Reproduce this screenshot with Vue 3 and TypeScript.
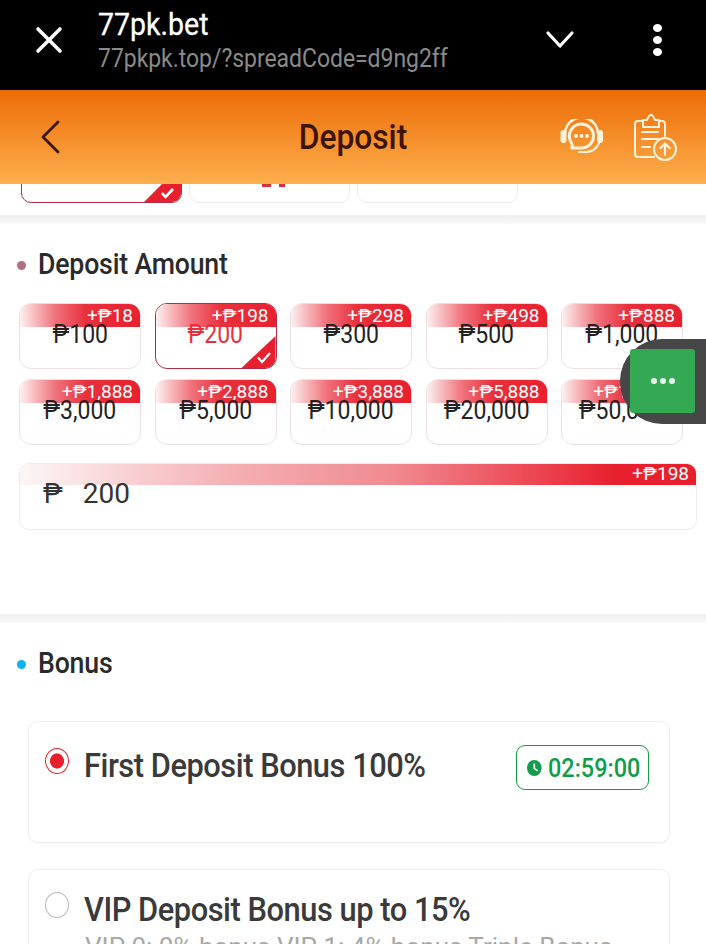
<script setup lang="ts">
const amounts = [
  { value: '₱100', bonus: '+₱18' },
  { value: '₱200', bonus: '+₱198', active: true },
  { value: '₱300', bonus: '+₱298' },
  { value: '₱500', bonus: '+₱498' },
  { value: '₱1,000', bonus: '+₱888' },
  { value: '₱3,000', bonus: '+₱1,888' },
  { value: '₱5,000', bonus: '+₱2,888' },
  { value: '₱10,000', bonus: '+₱3,888' },
  { value: '₱20,000', bonus: '+₱5,888' },
  { value: '₱50,000', bonus: '+₱18,888' },
]
</script>

<template>
  <div class="page">
    <div class="browser-bar">
      <svg class="close-icon" width="28" height="28" viewBox="0 0 28 28">
        <path d="M3 3 L25 25 M25 3 L3 25" stroke="#fff" stroke-width="3.6" stroke-linecap="round" />
      </svg>
      <div class="browser-text">
        <div class="site"><span class="squeeze">77pk.bet</span></div>
        <div class="url"><span class="squeeze">77pkpk.top/?spreadCode=d9ng2ff</span></div>
      </div>
      <svg class="chevron" width="30" height="20" viewBox="0 0 30 20">
        <path d="M3 3 L15 16 L27 3" fill="none" stroke="#fff" stroke-width="3.2" stroke-linecap="round" stroke-linejoin="round" />
      </svg>
      <div class="dots"><i></i><i></i><i></i></div>
    </div>

    <header class="top-bar">
      <svg class="back" width="22" height="34" viewBox="0 0 22 34">
        <path d="M18 2 L3 17 L18 32" fill="none" stroke="#3c1403" stroke-width="2.8" stroke-linecap="round" stroke-linejoin="round" />
      </svg>
      <h1 class="title"><span class="squeeze center">Deposit</span></h1>
      <svg class="support" width="44" height="38" viewBox="0 0 44 38">
        <path d="M5 15 A16.5 16.5 0 0 1 38 15" fill="none" stroke="#fff3dc" stroke-width="2.6" />
        <rect x="0.5" y="11" width="6" height="13" rx="3" fill="#fff3dc" />
        <rect x="37" y="11" width="6" height="13" rx="3" fill="#fff3dc" />
        <path d="M21.5 5 A12 12 0 0 1 21.5 29 L12 29 Q13 26 11 23 A12 12 0 0 1 21.5 5 Z" fill="none" stroke="#fff3dc" stroke-width="3" stroke-linejoin="round" />
        <circle cx="16" cy="17" r="2" fill="#fff3dc" />
        <circle cx="21.5" cy="17" r="2" fill="#fff3dc" />
        <circle cx="27" cy="17" r="2" fill="#fff3dc" />
        <path d="M19 33 H26 Q35 33 39 24" fill="none" stroke="#fff3dc" stroke-width="2.2" stroke-linecap="round" />
      </svg>
      <svg class="records" width="44" height="48" viewBox="0 0 44 48">
        <path d="M8 7 H4 Q1 7 1 10 V40 Q1 43 4 43 H20 M25 7 H28 Q31 7 31 10 V22" fill="none" stroke="#fff3dc" stroke-width="2" stroke-linecap="round" />
        <path d="M9 13 V6 H13 Q15 1 17 1 Q19 1 21 6 H25 V13 Z" fill="none" stroke="#fff3dc" stroke-width="2" stroke-linejoin="round" />
        <path d="M8 18 H24 M8 25 H24 M8 33 H16" stroke="#fff3dc" stroke-width="2" stroke-linecap="round" />
        <circle cx="31" cy="35" r="11" fill="none" stroke="#fff3dc" stroke-width="2" />
        <path d="M31 41 V30 M26.5 34 L31 29.5 L35.5 34" fill="none" stroke="#fff3dc" stroke-width="2.2" stroke-linecap="round" stroke-linejoin="round" />
      </svg>
    </header>

    <div class="channels">
      <div class="channel channel-active">
        <span class="corner small"><svg width="15" height="12" viewBox="0 0 15 12"><path d="M2 6 L5.5 10 L13 2" fill="none" stroke="#fff" stroke-width="2.6" /></svg></span>
      </div>
      <div class="channel"><span class="logo-tip"></span><span class="logo-tip right"></span></div>
      <div class="channel"></div>
    </div>
    <div class="divider"></div>

    <section class="amount">
      <h2 class="section-title"><span class="dot dot-mauve"></span><span class="squeeze">Deposit Amount</span></h2>
      <div class="grid">
        <div v-for="a in amounts" :key="a.value" class="tile" :class="{ active: a.active }">
          <div class="ribbon">{{ a.bonus }}</div>
          <div class="value"><span class="squeeze center">{{ a.value }}</span></div>
          <span v-if="a.active" class="corner"><svg width="16" height="13" viewBox="0 0 16 13"><path d="M2 6.5 L6 11 L14 2" fill="none" stroke="#fff" stroke-width="2.2" /></svg></span>
        </div>
      </div>
      <div class="input-box">
        <div class="ribbon wide">+₱198</div>
        <div class="input-value"><span class="peso">₱</span><span>200</span></div>
      </div>
    </section>
    <div class="divider"></div>

    <section class="bonus">
      <h2 class="section-title"><span class="dot dot-blue"></span><span class="squeeze">Bonus</span></h2>
      <div class="bonus-card first">
        <span class="radio radio-on"></span>
        <div class="bonus-name"><span class="squeeze">First Deposit Bonus 100%</span></div>
        <div class="timer">
          <svg width="18" height="20" viewBox="0 0 18 20">
            <ellipse cx="9" cy="10" rx="9" ry="10" fill="#0f9d4a" />
            <path d="M9 4.5 V10.5 L13 13.5" fill="none" stroke="#fff" stroke-width="2" />
          </svg>
          <span class="squeeze">02:59:00</span>
        </div>
      </div>
      <div class="bonus-card second">
        <span class="radio"></span>
        <div class="bonus-body">
          <div class="bonus-name"><span class="squeeze">VIP Deposit Bonus up to 15%</span></div>
          <div class="bonus-desc">VIP 0: 0% bonus VIP 1: 4% bonus Triple Bonus</div>
        </div>
      </div>
    </section>

    <div class="float-chat">
      <div class="chat-btn"><i></i><i></i><i></i></div>
    </div>
  </div>
</template>

<style>
html, body { margin: 0; padding: 0; background: #fff; }
</style>

<style scoped>
.page {
  position: relative;
  width: 706px;
  height: 944px;
  overflow: hidden;
  background: #fff;
  font-family: Roboto, "Liberation Sans", sans-serif;
  color: #222;
}
.squeeze {
  display: inline-block;
  transform: scaleX(0.92);
  transform-origin: left center;
  white-space: nowrap;
}
.squeeze.center { transform-origin: center; }
.browser-bar {
  height: 90px;
  background: #000;
  display: flex;
  align-items: center;
  box-sizing: border-box;
  padding: 0 36px 10px 35px;
}
.close-icon { flex: none; margin-right: 35px; }
.browser-text { flex: 1; margin-top: 2px; }
.site { color: #fff; font-size: 31px; font-weight: 400; line-height: 36px; -webkit-text-stroke: 0.3px #fff; }
.url { color: #8a8a8a; font-size: 25px; line-height: 32px; letter-spacing: -0.05px; }
.chevron { flex: none; margin-right: 78px; }
.dots { display: flex; flex-direction: column; gap: 4px; margin-right: 8px; }
.dots i { width: 9px; height: 8px; border-radius: 50%; background: #fff; display: block; }

.top-bar {
  height: 94px;
  background: linear-gradient(180deg, #ec6c08 0%, #fdaf4c 100%);
  display: flex;
  align-items: center;
  position: relative;
  z-index: 1;
  padding: 0 28px 0 40px;
  box-sizing: border-box;
}
.title {
  position: absolute;
  left: 0;
  right: 0;
  margin: 0;
  text-align: center;
  font-size: 34.5px;
  font-weight: 500;
  color: #3c1403;
}
.support { margin-left: auto; margin-right: 30px; margin-top: 1px; }
.records { margin-top: 2px; }
.channels {
  display: flex;
  gap: 7px;
  height: 19px;
  padding-left: 21px;
}
.channel {
  position: relative;
  width: 161px;
  height: 40px;
  margin-top: -21px;
  box-sizing: border-box;
  border: 1px solid #ececf0;
  border-radius: 10px;
  overflow: hidden;
}
.channel-active { border-color: #b33048; }
.logo-tip {
  position: absolute;
  left: 72px;
  top: 20px;
  width: 9px;
  height: 3px;
  background: #d9323c;
}
.logo-tip.right { left: 89px; width: 6px; }
.corner {
  position: absolute;
  right: 0;
  bottom: 0;
  width: 34px;
  height: 32px;
  background: #e8202e;
  clip-path: polygon(100% 0, 100% 100%, 0 100%);
  display: flex;
  align-items: flex-end;
  justify-content: flex-end;
  padding: 0 4px 4px 0;
  box-sizing: border-box;
}
.corner.small {
  width: 37px;
  height: 19px;
  clip-path: polygon(19px 0, 100% 0, 100% 100%, 0 100%);
  padding: 0 6px 3px 0;
}
.divider {
  height: 9px;
  margin-top: 12px;
  background: linear-gradient(180deg, #eeeeee, #f9f9f9);
}
.amount { height: 378px; padding: 0 10px 0 19px; box-sizing: border-box; }
.section-title {
  display: flex;
  align-items: center;
  margin: 0;
  font-size: 29px;
  font-weight: 500;
  color: #2a2a2a;
  line-height: 36px;
  letter-spacing: -0.2px;
}
.amount .section-title { padding-top: 22px; margin-left: -2px; }
.dot { width: 9px; height: 9px; border-radius: 50%; margin-right: 12px; margin-top: 2px; flex: none; }
.dot-mauve { background: #b06f85; }
.dot-blue { background: #0cb0f5; }
.grid {
  display: grid;
  grid-template-columns: repeat(5, 122px);
  grid-auto-rows: 66px;
  column-gap: 13.5px;
  row-gap: 10px;
  margin-top: 21px;
}
.tile {
  position: relative;
  box-sizing: border-box;
  border: 1px solid #eee0e2;
  border-radius: 12px;
  overflow: hidden;
  text-align: center;
}
.tile.active { border: 1.5px solid #b32a42; }
.ribbon {
  height: 23px;
  background: linear-gradient(90deg, #fdf0f0 0%, #f0707a 30%, #e8303c 55%, #e8202e 100%);
  color: #fff;
  font-size: 19px;
  line-height: 23px;
  text-align: right;
  padding-right: 7px;
}
.value {
  font-size: 25px;
  line-height: 30px;
  margin-top: -7px;
  position: relative;
  color: #222;
}
.active .value { color: #e8303c; }
.input-box {
  position: relative;
  width: 678px;
  height: 67px;
  margin-top: 18px;
  box-sizing: border-box;
  border: 1px solid #ececec;
  border-radius: 10px;
  overflow: hidden;
}
.ribbon.wide {
  height: 21px;
  line-height: 19px;
  background: linear-gradient(90deg, #fdf6f6 0%, #f5b2b6 30%, #f08a90 55%, #ec4a55 75%, #e8202e 88%, #e8202e 100%);
}
.input-value {
  display: flex;
  align-items: center;
  gap: 20px;
  padding-left: 23px;
  font-size: 28px;
  line-height: 32px;
  color: #333;
  margin-top: -7px;
  position: relative;
}
.peso { font-size: 27px; }
.bonus { padding: 0 36px 0 28px; }
.bonus .section-title { padding-top: 22px; margin-left: -11px; margin-bottom: 40px; }
.bonus-card {
  position: relative;
  box-sizing: border-box;
  width: 642px;
  height: 122px;
  border: 1px solid #eee;
  border-radius: 10px;
  display: flex;
  align-items: flex-start;
  padding: 26px 20px 0 16px;
  margin-bottom: 26px;
  box-shadow: 0 1px 2px rgba(0, 0, 0, 0.04);
}
.bonus-card.second { padding-top: 22px; }
.radio {
  flex: none;
  width: 24px;
  height: 26px;
  border-radius: 50%;
  border: 1px solid #b9b9b9;
  box-sizing: border-box;
  margin-right: 16px;
}
.radio-on {
  border: 1.5px solid #e8202e;
  background: radial-gradient(closest-side, #e8202e 0 60%, #fff 66%);
}
.bonus-name { font-size: 33.5px; font-weight: 500; color: #3a3a3a; line-height: 36px; letter-spacing: -0.5px; margin-left: -1px; }
.bonus-desc { font-size: 26px; color: #a8a8a8; line-height: 30px; margin-top: 4px; white-space: nowrap; }
.timer {
  position: absolute;
  right: 20px;
  top: 23px;
  width: 133px;
  height: 45px;
  box-sizing: border-box;
  border: 1.5px solid #0f9d4a;
  border-radius: 9px;
  color: #0f9d4a;
  display: flex;
  align-items: center;
  gap: 6px;
  padding-left: 10px;
  font-size: 25.5px;
  font-weight: 500;
}
.float-chat {
  position: absolute;
  right: 0;
  top: 339px;
  width: 86px;
  height: 85px;
  background: #474747;
  border-radius: 42px 0 0 42px;
  z-index: 2;
}
.chat-btn {
  position: absolute;
  left: 10px;
  top: 10px;
  width: 65px;
  height: 64px;
  border-radius: 3px;
  background: #34a853;
  display: flex;
  align-items: center;
  justify-content: center;
  gap: 3px;
}
.chat-btn i { width: 6px; height: 6px; border-radius: 50%; background: #e8f5ec; display: block; }
</style>
